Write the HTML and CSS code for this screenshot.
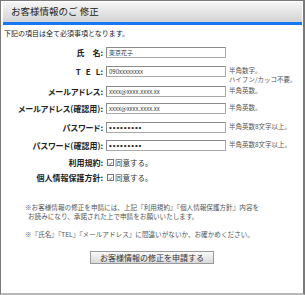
FILE: index.html
```html
<!DOCTYPE html>
<html lang="ja">
<head>
<meta charset="utf-8">
<link rel="stylesheet" href="styles.css">
</head>
<body>
<div class="frame">
  <div class="head"><h1 class="title">お客様情報のご 修正</h1></div>
  <p class="intro">下記の項目は全て必須事項となります。</p>
  <div class="form">
    <div class="row r1">
      <span class="label">氏　名:</span>
      <span class="field">東京花子</span>
    </div>
    <div class="row r2">
      <span class="label"><span class="spaced">TE</span>L:</span>
      <span class="field">090xxxxxxxx</span>
      <span class="note">半角数字。<br>ハイフン/カッコ不要。</span>
    </div>
    <div class="row r3">
      <span class="label">メールアドレス:</span>
      <span class="field">xxxx@xxxx.xxxx.xx</span>
      <span class="note">半角英数。</span>
    </div>
    <div class="row r4">
      <span class="label">メールアドレス(確認用):</span>
      <span class="field">xxxx@xxxx.xxxx.xx</span>
      <span class="note">半角英数。</span>
    </div>
    <div class="row r5">
      <span class="label">パスワード:</span>
      <span class="field dots">•••••••••</span>
      <span class="note">半角英数8文字以上。</span>
    </div>
    <div class="row r6">
      <span class="label">パスワード(確認用):</span>
      <span class="field dots">•••••••••</span>
      <span class="note">半角英数8文字以上。</span>
    </div>
    <div class="row r7">
      <span class="label">利用規約:</span>
      <span class="agree"><span class="box"><svg viewBox="0 0 7 7" width="7" height="7"><path d="M1.2 3.4 L2.9 5.2 L5.9 1.4" fill="none" stroke="#444" stroke-width="0.9"/></svg></span>同意する。</span>
    </div>
    <div class="row r8">
      <span class="label">個人情報保護方針:</span>
      <span class="agree"><span class="box"><svg viewBox="0 0 7 7" width="7" height="7"><path d="M1.2 3.4 L2.9 5.2 L5.9 1.4" fill="none" stroke="#444" stroke-width="0.9"/></svg></span>同意する。</span>
    </div>
  </div>
  <div class="notes">
    <p>※お客様情報の修正を申請には、上記『利用規約』『個人情報保護方針』内容を<br>&nbsp;&nbsp;お読みになり、承諾された上で申請をお願いいたします。</p>
    <p class="n2">※『氏名』『TEL』『メールアドレス』に間違いがないか、お確かめください。</p>
  </div>
  <div class="actions"><span class="button">お客様情報の修正を申請する</span></div>
</div>
</body>
</html>
```
FILE: styles.css
```css
html, body {
  margin: 0;
  padding: 0;
  background: #fff;
}
body {
  width: 305px;
  height: 295px;
  font-family: "Noto Sans CJK JP", "Liberation Sans", sans-serif;
  color: #222;
}
.frame {
  box-sizing: border-box;
  width: 305px;
  height: 295px;
  border: 1px solid #7a7a7a;
  border-right-width: 2px;
  border-bottom: 2px solid #b8b8b8;
  padding: 1px 1px 0 2px;
}
.head {
  height: 20px;
  background: linear-gradient(#f6f6f6, #d3d3d3);
  border-bottom: 3px solid #1877f2;
  display: flex;
  align-items: center;
  padding-left: 8px;
}
.title {
  margin: 0;
  font-size: 9.5px;
  font-weight: normal;
  color: #222;
  line-height: 1;
}
.intro {
  margin: 4px 0 0 1px;
  font-size: 7px;
  line-height: 9px;
}
.form {
  margin-top: 9px;
  display: flex;
  flex-direction: column;
}
.row {
  display: flex;
  align-items: flex-start;
  height: 11px;
}
.r2 { margin-top: 8px; }
.r3 { margin-top: 9px; }
.r4 { margin-top: 6px; }
.r5 { margin-top: 8px; }
.r6 { margin-top: 7px; }
.r7 { margin-top: 6px; }
.r8 { margin-top: 4px; }
.label {
  width: 100px;
  flex: none;
  text-align: right;
  font-size: 8px;
  font-weight: bold;
  line-height: 11px;
  font-feature-settings: "palt";
  color: #222;
}
.spaced {
  letter-spacing: 5px;
}
.field {
  box-sizing: border-box;
  flex: none;
  width: 120px;
  height: 11px;
  margin-left: 3px;
  border: 1px solid #a9a9a9;
  border-top-color: #8a8a8a;
  border-left-color: #8a8a8a;
  font-size: 6px;
  line-height: 9px;
  padding-left: 2px;
  color: #333;
  overflow: hidden;
  white-space: nowrap;
}
.dots {
  font-family: "Liberation Sans", sans-serif;
  font-size: 8px;
  letter-spacing: 0.9px;
  color: #222;
}
.note {
  margin-left: 3px;
  font-size: 6.5px;
  line-height: 9px;
  color: #555;
  white-space: nowrap;
}
.agree {
  margin-left: 4px;
  display: flex;
  align-items: center;
  font-size: 7.5px;
  line-height: 11px;
  color: #333;
}
.box {
  box-sizing: border-box;
  width: 7px;
  height: 7px;
  border: 0.8px solid #777;
  display: flex;
  margin-right: 1px;
}
.box svg { display: block; }
.notes {
  margin-top: 20px;
  padding-left: 22px;
  font-size: 6.6px;
  line-height: 9px;
  color: #555;
}
.notes p { margin: 0; }
.notes .n2 { margin-top: 9px; }
.actions {
  display: flex;
  justify-content: center;
  margin-top: 12px;
  padding-right: 1px;
}
.button {
  box-sizing: border-box;
  width: 124px;
  height: 13px;
  border: 1px solid #9a9a9a;
  background: linear-gradient(#f9f9f9, #d9d9d9);
  font-size: 8px;
  line-height: 11px;
  text-align: center;
  color: #333;
}
```
